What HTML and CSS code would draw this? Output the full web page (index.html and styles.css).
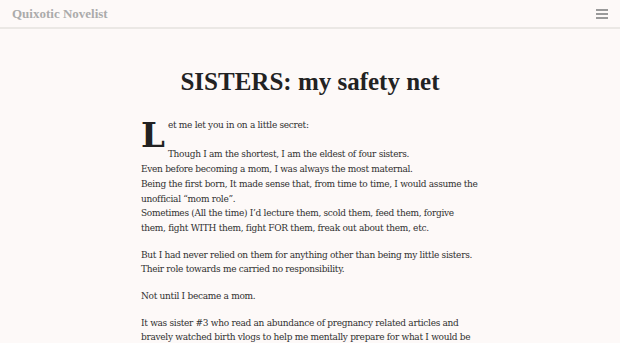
FILE: index.html
```html
<!DOCTYPE html>
<html>
<head>
<meta charset="utf-8">
<link rel="stylesheet" href="styles.css">
</head>
<body>
<header class="topbar">
  <div class="brand">Quixotic Novelist</div>
  <div class="menu" aria-label="menu"><span></span><span></span><span></span></div>
</header>
<main class="post">
  <h1 class="title">SISTERS: my safety net</h1>
  <p class="first"><span class="dropcap">L</span>et me let you in on a little secret:<br><br>Though I am the shortest, I am the eldest of four sisters.<br>Even before becoming a mom, I was always the most maternal.<br>Being the first born, It made sense that, from time to time, I would assume the unofficial “mom role”.<br>Sometimes (All the time) I’d lecture them, scold them, feed them, forgive them, fight WITH them, fight FOR them, freak out about them, etc.</p>
  <p>But I had never relied on them for anything other than being my little sisters.<br>Their role towards me carried no responsibility.</p>
  <p>Not until I became a mom.</p>
  <p>It was sister #3 who read an abundance of pregnancy related articles and bravely watched birth vlogs to help me mentally prepare for what I would be</p>
</main>
</body>
</html>
```
FILE: styles.css
```css
html, body { margin: 0; padding: 0; }
body {
  background: #fdf9f8;
  font-family: "DejaVu Serif", serif;
  color: #303030;
}
.topbar {
  height: 27px;
  border-bottom: 2px solid #ebe8e5;
  display: flex;
  align-items: center;
  justify-content: space-between;
  padding: 0 12px;
}
.brand {
  font-family: "Liberation Serif", serif;
  font-weight: bold;
  font-size: 13px;
  color: #ababab;
}
.menu {
  display: flex;
  flex-direction: column;
  gap: 2px;
  width: 12px;
}
.menu span {
  display: block;
  height: 2px;
  background: #9a9a9a;
}
.post {
  width: 338px;
  margin: 0 auto;
  padding-top: 39px;
}
.title {
  font-family: "Liberation Serif", serif;
  font-weight: bold;
  font-size: 25px;
  color: #222;
  text-align: center;
  margin: 0 0 22px;
}
p {
  font-size: 9px;
  letter-spacing: -0.3px;
  line-height: 14.7px;
  margin: 0 0 12px;
}
.dropcap {
  float: left;
  font-size: 34px;
  line-height: 28px;
  font-weight: bold;
  color: #222;
  letter-spacing: 0;
  margin: 3px 3px 0 0;
}
```
